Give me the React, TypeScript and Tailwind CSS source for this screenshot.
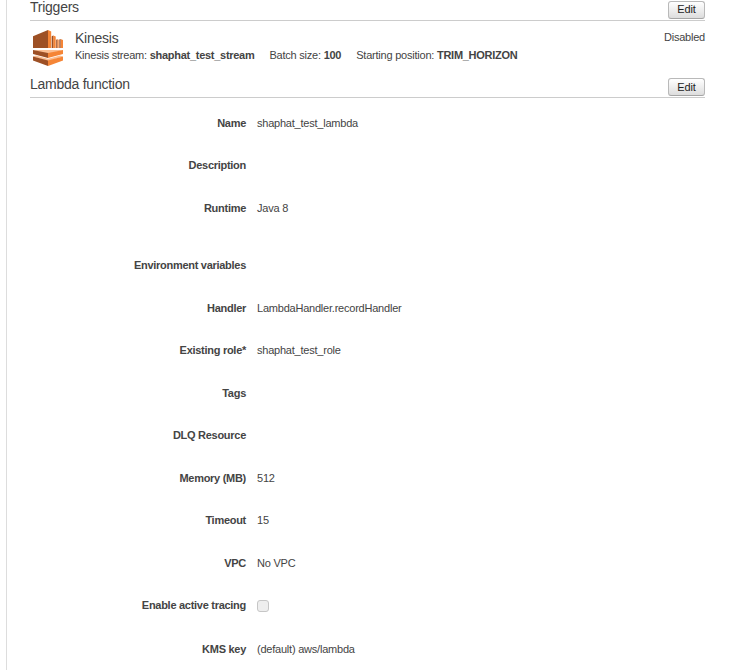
import type { ReactNode } from "react";

type Field = { label: string; value?: ReactNode; height: string };

const fields: Field[] = [
  { label: "Name", value: "shaphat_test_lambda", height: "h-[42px]" },
  { label: "Description", height: "h-[43px]" },
  { label: "Runtime", value: "Java 8", height: "h-[57px]" },
  { label: "Environment variables", height: "h-[43px]" },
  { label: "Handler", value: "LambdaHandler.recordHandler", height: "h-[42px]" },
  { label: "Existing role*", value: "shaphat_test_role", height: "h-[43px]" },
  { label: "Tags", height: "h-[42px]" },
  { label: "DLQ Resource", height: "h-[43px]" },
  { label: "Memory (MB)", value: "512", height: "h-[42px]" },
  { label: "Timeout", value: "15", height: "h-[43px]" },
  { label: "VPC", value: "No VPC", height: "h-[42px]" },
  {
    label: "Enable active tracing",
    value: (
      <input
        type="checkbox"
        disabled
        aria-label="Enable active tracing"
        className="mt-[3px] block size-3 appearance-none rounded-[3px] border border-[#c6c6c6] bg-[#eeeeee]"
      />
    ),
    height: "h-[44px]",
  },
  { label: "KMS key", value: "(default) aws/lambda", height: "h-4" },
];

function EditButton({ className }: { className: string }) {
  return (
    <button
      className={`block h-[18px] w-[37px] rounded-[3px] border border-[#b9b9b9] border-b-[#a5a5a5] bg-linear-to-b from-white to-[#dddddd] text-center text-[11px] tracking-[-0.1px] text-[#222222] ${className}`}
    >
      Edit
    </button>
  );
}

function SectionHeader({ title, buttonClass }: { title: string; buttonClass: string }) {
  return (
    <header className="flex h-[22px] items-start justify-between border-b border-[#cccccc]">
      <h2 className="text-[14px] leading-4 tracking-[-0.25px]">{title}</h2>
      <div className="pt-[2px]">
        <EditButton className={buttonClass} />
      </div>
    </header>
  );
}

function KinesisIcon() {
  return (
    <svg width="30" height="36" viewBox="0 0 30 36" aria-hidden="true">
      <path d="M0 6.2 15 0v18H0z" fill="#9d5025" />
      <path d="M15 0l3.2 1.6V18H15zM20.2 5.5l2.5 1V18h-2.5zM24.3 9.2l1.4.5V18h-1.4zM27.6 9l2.4 1v8h-2.4z" fill="#f58536" />
      <path d="M18.7 6.2l1.5-.7V18h-1.5zM23.2 9.7l1.1-.5V18h-1.1zM26.3 9.6l1.3-.6V18h-1.3z" fill="#9d5025" />
      <path d="M0 20h30L15 24z" fill="#fbbf93" />
      <path d="M0 20l15 3v5L0 24z" fill="#9d5025" />
      <path d="M30 20l-15 3v5l15-4z" fill="#f58536" />
      <path d="M0 26.6l3-1 12 3.2 12-3.2 3 1-15 4.6z" fill="#fbbf93" />
      <path d="M0 26.6l15 4V36L0 30.4z" fill="#9d5025" />
      <path d="M30 26.6l-15 4V36l15-5.6z" fill="#f58536" />
    </svg>
  );
}

export default function App() {
  return (
    <div className="h-[671px] overflow-hidden bg-white pl-[6px] font-['Liberation_Sans',Arial,sans-serif] text-[11px] leading-4 tracking-[-0.22px] text-[#444444]">
      <main className="h-full border-l border-[#dddddd] pr-11 pl-[23px]">
        <section className="-mt-px">
          <SectionHeader title="Triggers" buttonClass="leading-[14px] pb-[2px]" />
          <div className="flex h-[55px]">
            <div className="w-[45px] pt-[9px] pl-[3px]">
              <KinesisIcon />
            </div>
            <div className="flex-1 pt-[9px]">
              <h3 className="text-[14px] leading-4 tracking-[-0.25px]">Kinesis</h3>
              <div className="mt-px flex gap-[15px] whitespace-nowrap">
                <span>Kinesis stream: <b className="tracking-[-0.28px]">shaphat_test_stream</b></span>
                <span>Batch size: <b className="tracking-[-0.28px]">100</b></span>
                <span>Starting position: <b className="tracking-[-0.28px]">TRIM_HORIZON</b></span>
              </div>
            </div>
            <span className="pt-2">Disabled</span>
          </div>
        </section>
        <section>
          <SectionHeader title="Lambda function" buttonClass="leading-4" />
          <dl className="pt-[17px]">
            {fields.map(({ label, value, height }) => (
              <div key={label} className={`flex ${height}`}>
                <dt className="w-[216px] text-right font-bold tracking-[-0.28px]">{label}</dt>
                <dd className="ml-[11px]">{value}</dd>
              </div>
            ))}
          </dl>
        </section>
      </main>
    </div>
  );
}
